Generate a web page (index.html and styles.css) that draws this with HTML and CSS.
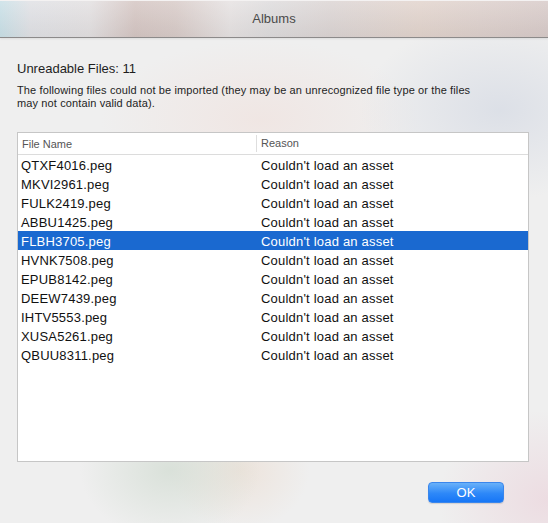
FILE: index.html
```html
<!DOCTYPE html>
<html lang="en">
<head>
<meta charset="utf-8">
<title>Albums</title>
<link rel="stylesheet" href="styles.css">
</head>
<body>
<div class="window">
  <header class="titlebar">Albums</header>
  <main class="content">
    <h1 class="heading">Unreadable Files: 11</h1>
    <p class="message">The following files could not be imported (they may be an unrecognized file type or the files may not contain valid data).</p>
    <div class="table">
      <div class="thead">
        <div class="th th-name">File Name</div>
        <div class="th th-reason">Reason</div>
      </div>
      <div class="tbody">
        <div class="row"><span class="cell name">QTXF4016.peg</span><span class="cell reason">Couldn't load an asset</span></div>
        <div class="row"><span class="cell name">MKVI2961.peg</span><span class="cell reason">Couldn't load an asset</span></div>
        <div class="row"><span class="cell name">FULK2419.peg</span><span class="cell reason">Couldn't load an asset</span></div>
        <div class="row"><span class="cell name">ABBU1425.peg</span><span class="cell reason">Couldn't load an asset</span></div>
        <div class="row selected"><span class="cell name">FLBH3705.peg</span><span class="cell reason">Couldn't load an asset</span></div>
        <div class="row"><span class="cell name">HVNK7508.peg</span><span class="cell reason">Couldn't load an asset</span></div>
        <div class="row"><span class="cell name">EPUB8142.peg</span><span class="cell reason">Couldn't load an asset</span></div>
        <div class="row"><span class="cell name">DEEW7439.peg</span><span class="cell reason">Couldn't load an asset</span></div>
        <div class="row"><span class="cell name">IHTV5553.peg</span><span class="cell reason">Couldn't load an asset</span></div>
        <div class="row"><span class="cell name">XUSA5261.peg</span><span class="cell reason">Couldn't load an asset</span></div>
        <div class="row"><span class="cell name">QBUU8311.peg</span><span class="cell reason">Couldn't load an asset</span></div>
      </div>
    </div>
    <div class="actions">
      <button class="btn-ok" type="button">OK</button>
    </div>
  </main>
</div>
</body>
</html>
```

FILE: styles.css
```css
html, body {
  margin: 0;
  padding: 0;
}

body {
  width: 548px;
  height: 523px;
  overflow: hidden;
  font-family: "Liberation Sans", Arial, sans-serif;
  color: #1a1a1a;
}

.window {
  width: 548px;
  height: 523px;
  display: flex;
  flex-direction: column;
  background:
    radial-gradient(ellipse 90px 70px at 170px 470px, rgba(210, 220, 210, 0.75), rgba(210, 220, 210, 0) 100%),
    radial-gradient(ellipse 70px 60px at 240px 470px, rgba(236, 224, 214, 0.8), rgba(236, 224, 214, 0) 100%),
    radial-gradient(ellipse 110px 90px at 548px 500px, rgba(236, 218, 224, 0.9), rgba(236, 218, 224, 0) 100%),
    radial-gradient(ellipse 140px 90px at 500px 110px, rgba(218, 222, 230, 0.9), rgba(218, 222, 230, 0) 100%),
    radial-gradient(ellipse 160px 80px at 260px 120px, rgba(240, 226, 222, 0.7), rgba(240, 226, 222, 0) 100%),
    #efefef;
}

.titlebar {
  flex: 0 0 auto;
  display: flex;
  align-items: center;
  justify-content: center;
  font-size: 13px;
  color: #4a4a4a;
  border-top: 1px solid #f4f2f2;
  border-bottom: 1px solid #8c8a8a;
  box-sizing: border-box;
  height: 38px;
  padding-bottom: 1px;
  background:
    linear-gradient(to bottom, rgba(255, 255, 255, 0.15), rgba(0, 0, 0, 0.04)),
    linear-gradient(to right, #c9e0e7 0px, #e0e1e5 30px, #e3e0e1 90px, #d5c6c3 135px, #d8cbc8 175px, #e6e2e2 230px, #dedcdd 270px, #dcd5d4 330px, #e2d4cd 420px, #ddd0cc 480px, #d8cbc9 548px);
  box-shadow: 0 1px 2px rgba(0, 0, 0, 0.08);
}

.content {
  flex: 1 1 auto;
  padding: 23px 19px 0 17px;
  display: flex;
  flex-direction: column;
}

.heading {
  margin: 0;
  font-size: 13px;
  line-height: 16px;
  font-weight: normal;
  color: #1e1e1e;
}

.message {
  margin: 7px 0 0 0;
  font-size: 11px;
  line-height: 13px;
  letter-spacing: 0.12px;
  color: #1e1e1e;
  max-width: 472px;
}

.table {
  margin-top: 22px;
  height: 330px;
  box-sizing: border-box;
  border: 1px solid #c6c6c6;
  background: #ffffff;
  display: flex;
  flex-direction: column;
}

.thead {
  height: 22px;
  box-sizing: border-box;
  border-bottom: 1px solid #dcdcdc;
  display: grid;
  grid-template-columns: 238px 1fr;
  align-items: center;
}

.th {
  font-size: 11px;
  color: #555;
  line-height: 14px;
}

.th-name {
  padding-left: 4px;
}

.th-reason {
  border-left: 1px solid #dedede;
  padding-left: 4px;
  height: 17px;
  line-height: 17px;
}

.tbody {
  display: flex;
  flex-direction: column;
}

.row {
  height: 19px;
  display: grid;
  grid-template-columns: 239px 1fr;
  align-items: center;
  font-size: 13px;
  letter-spacing: 0.2px;
  color: #111;
}

.cell {
  padding-top: 2px;
}

.row.selected {
  background: #1a69d0;
  color: #ffffff;
}

.cell.name {
  padding-left: 3px;
}

.cell.reason {
  padding-left: 4px;
}

.actions {
  margin-top: 20px;
  display: flex;
  justify-content: flex-end;
  padding-right: 25px;
}

.btn-ok {
  width: 76px;
  height: 21px;
  box-sizing: border-box;
  border: 1px solid #3a86ec;
  border-radius: 4px;
  background: linear-gradient(to bottom, #69b1f9, #2d88f8 55%, #1776f6);
  color: #ffffff;
  font-family: "Liberation Sans", Arial, sans-serif;
  font-size: 13px;
  line-height: 19px;
  padding: 0;
  box-shadow: 0 1px 1px rgba(0, 0, 0, 0.12);
}
```
